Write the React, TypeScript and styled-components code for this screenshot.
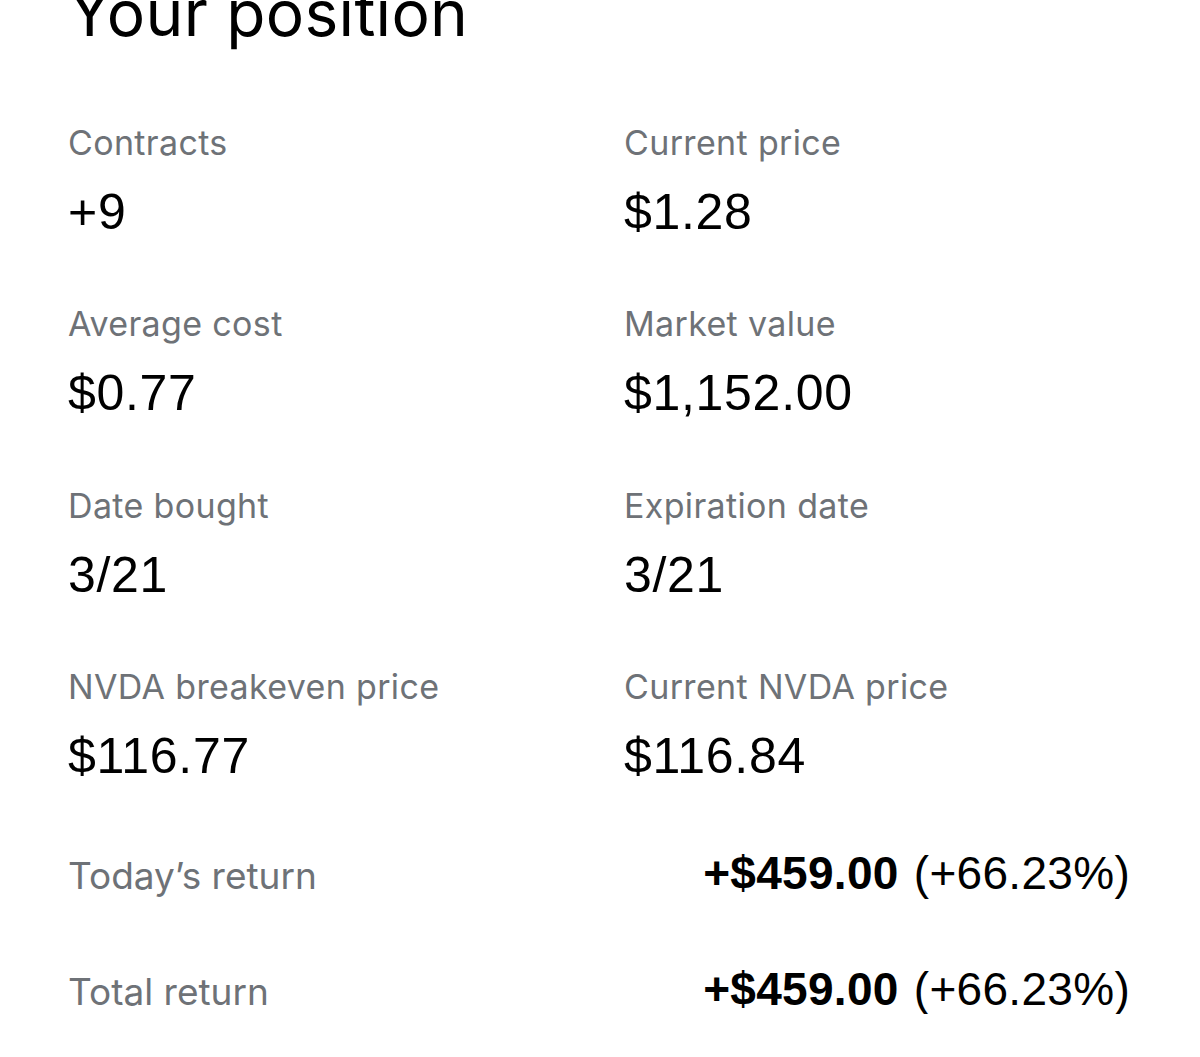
import styled, { createGlobalStyle } from "styled-components";

const GlobalStyle = createGlobalStyle`
  html, body {
    margin: 0;
    padding: 0;
    background: #ffffff;
  }
  body {
    font-family: Inter, "Noto Sans", "Liberation Sans", sans-serif;
    color: #000000;
    overflow: hidden;
  }
`;

const stats = [
  { label: "Contracts", value: "+9" },
  { label: "Current price", value: "$1.28" },
  { label: "Average cost", value: "$0.77" },
  { label: "Market value", value: "$1,152.00" },
  { label: "Date bought", value: "3/21" },
  { label: "Expiration date", value: "3/21" },
  { label: "NVDA breakeven price", value: "$116.77" },
  { label: "Current NVDA price", value: "$116.84" },
];

const returns = [
  { label: "Today’s return", amount: "+$459.00", percent: "(+66.23%)" },
  { label: "Total return", amount: "+$459.00", percent: "(+66.23%)" },
];

const App = () => {
  return (
    <>
      <GlobalStyle />
      <Page>
        <Title>Your position</Title>
        <StatGrid>
          {stats.map((s) => (
            <Stat key={s.label}>
              <Label>{s.label}</Label>
              <Value>{s.value}</Value>
            </Stat>
          ))}
        </StatGrid>
        <Returns>
          {returns.map((r) => (
            <ReturnRow key={r.label}>
              <ReturnLabel>{r.label}</ReturnLabel>
              <ReturnValue>
                <strong>{r.amount}</strong> {r.percent}
              </ReturnValue>
            </ReturnRow>
          ))}
        </Returns>
      </Page>
    </>
  );
};

const Page = styled.main`
  padding: 0 70px 0 68px;
`;

const Title = styled.h1`
  margin: -25px 0 0;
  font-size: 64px;
  line-height: 76px;
  font-weight: 400;
  letter-spacing: 0.3px;
`;

const StatGrid = styled.section`
  display: grid;
  grid-template-columns: 556px 1fr;
  row-gap: 64.5px;
  margin-top: 71.6px;
`;

const Stat = styled.div`
  display: flex;
  flex-direction: column;
  gap: 21px;
`;

const Label = styled.div`
  font-size: 34px;
  line-height: 40px;
  color: #6e7277;
  letter-spacing: 0.35px;
`;

const Value = styled.div`
  font-family: "Liberation Sans", Arial, sans-serif;
  font-size: 50px;
  line-height: 56px;
  letter-spacing: 0.7px;
  color: #000000;
`;

const Returns = styled.section`
  display: flex;
  flex-direction: column;
  gap: 69px;
  margin-top: 67px;
`;

const ReturnRow = styled.div`
  display: flex;
  justify-content: space-between;
  align-items: baseline;
  line-height: 44px;
`;

const ReturnLabel = styled.span`
  font-size: 37px;
  color: #6e7277;
`;

const ReturnValue = styled.span`
  font-family: "Liberation Sans", Arial, sans-serif;
  font-size: 46px;
  letter-spacing: 0.3px;
  word-spacing: 2px;
  color: #000000;

  strong {
    font-weight: 700;
  }
`;

export default App;
